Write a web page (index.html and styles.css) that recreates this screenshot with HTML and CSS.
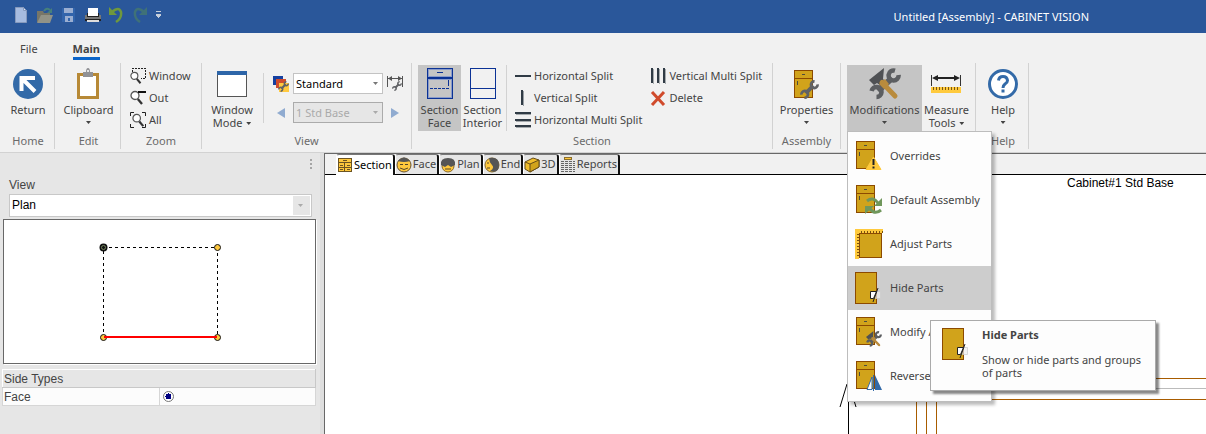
FILE: index.html
```html
<!DOCTYPE html>
<html lang="en">
<head>
<meta charset="utf-8">
<title>Untitled [Assembly] - CABINET VISION</title>
<link rel="stylesheet" href="styles.css">
</head>
<body>
<svg class="defs" aria-hidden="true">
  <symbol id="wrench" viewBox="0 0 20 20">
    <g fill="none" stroke="#606265"><path stroke-width="4" d="M6 14L14 6"/><path stroke-width="2.8" d="M15.3 1.5A3.5 3.5 0 1 0 18.5 4.7M4.7 18.5A3.5 3.5 0 1 0 1.5 15.3"/></g>
  </symbol>
  <symbol id="tools" viewBox="0 0 32 32">
    <g fill="none" stroke="#5c5e61"><path stroke-width="6" d="M9 23L23 10"/><path stroke-width="4.5" d="M26 2.6A5 5 0 1 0 29.6 7M7.5 29A5 5 0 1 0 2.6 23"/></g>
    <path fill="#4f5154" d="M15 0L14 11L17 14L12 18L8 15L5 17L0 12Z"/>
    <path fill="none" stroke="#b98b3d" stroke-width="5" stroke-linecap="round" d="M13 14.500L26 28"/>
    <path fill="#b98b3d" d="M10 16L16 11L20 16L15 21Z"/>
  </symbol>
  <symbol id="cabinet" viewBox="0 0 20 28">
    <g shape-rendering="crispEdges"><path fill="#d1a31b" stroke="#8c4a00" d="M.5.5h18v27H.5zM.5 8.500h18"/><path stroke="#4d4d40" d="M8 4.500h3M3.500 11v4"/></g>
  </symbol>
  <symbol id="hidden-part" viewBox="0 0 28 32">
    <path shape-rendering="crispEdges" fill="#d1a31b" stroke="#8c4a00" d="M.5.5h21v31H.5z"/>
    <path fill="#eee" fill-opacity=".7" stroke="#ccc" stroke-opacity=".7" d="M20.500 19.500h5v7h-5z"/>
    <path fill="#fff" stroke="#222" d="M15.500 19.500h6l-3 7h-3z"/>
    <path stroke="#222" d="M23 16L18 30"/>
  </symbol>
  <symbol id="lens" viewBox="0 0 16 16">
    <circle cx="5" cy="5.500" r="4" fill="#fff" stroke="#555" stroke-width="1.300"/><path stroke="#333" stroke-width="2.300" d="M7.800 9L12 14"/>
  </symbol>
</svg>

<header class="titlebar">
  <div class="quick">
    <button aria-label="New"><svg width="16" height="16"><path fill="#a7bce0" stroke="#879abd" d="M2.500.5h8l3 3v12h-11z"/><path fill="#dce5f5" stroke="#879abd" d="M10.500.5v3h3z"/></svg></button>
    <button aria-label="Open"><svg width="18" height="16"><path fill="#777668" d="M1 4h6l1 2h6v9H1z"/><path fill="#929387" d="M5 8h12l-3 8H1z"/><path fill="none" stroke="#47807b" stroke-width="2" d="M8 4q3-4 6-1"/><path fill="#47807b" d="M16 1v5h-5z"/></svg></button>
    <button aria-label="Save"><svg width="16" height="16"><path fill="#3264ab" d="M1 1h13v14H1z"/><path fill="#9aaed1" d="M3 1h9v5H3zM4 9h8v6H4z"/><path fill="#3264ab" d="M7 11h2v3H7z"/></svg></button>
    <button aria-label="Print"><svg width="18" height="16"><path fill="#777" d="M1 8h16v6H1z"/><path fill="#222" d="M3 6h12v4H3zM1 12h16v2H1z"/><path fill="#fff" d="M4 1h10v8H4z"/><path fill="#ddd" d="M3 13h12v2H3z"/></svg></button>
    <button aria-label="Undo"><svg width="16" height="16"><path fill="none" stroke="#6f983d" stroke-width="2.500" d="M3 5Q10 -1 12 5Q13 11 7 15"/><path fill="#6f983d" d="M0 0v8h8z"/></svg></button>
    <button aria-label="Redo"><svg width="16" height="16"><path fill="none" stroke="#3f7178" stroke-width="2.500" d="M12 5Q5 -1 3 5Q2 11 8 15"/><path fill="#3f7178" d="M15 0v8H7z"/></svg></button>
    <button aria-label="Customize"><svg class="crisp" width="8" height="8"><path stroke="#c5cedb" d="M1 .5h5M1 3.500h5"/><path fill="#c5cedb" d="M1 4h5L3.500 7z"/></svg></button>
  </div>
  <h1>Untitled [Assembly] - CABINET VISION</h1>
</header>

<nav class="tabs"><button>File</button><button class="current">Main</button></nav>

<div class="ribbon">
  <section class="group home">
    <div class="tools"><button class="big"><svg width="32" height="32"><circle cx="16" cy="16" r="15" fill="#336aa8"/><path fill="none" stroke="#fff" stroke-width="4" d="M9.500 23V10H23M10 10.500L23 23.500"/></svg><span>Return</span></button></div>
    <h2>Home</h2>
  </section>
  <section class="group edit">
    <div class="tools"><button class="big"><svg width="32" height="32"><path fill="#fff" stroke="#b78936" stroke-width="3" d="M6.500 6.500h19v23h-19z"/><path fill="#919296" d="M11 4h3q0-4 2-4t2 4h3v5H11z"/><circle cx="16" cy="3" r="1" fill="#fff"/></svg><span>Clipboard</span><i class="caret"></i></button></div>
    <h2>Edit</h2>
  </section>
  <section class="group zoom">
    <div class="tools stack">
      <button class="small"><svg width="16" height="16"><path class="crisp" fill="none" stroke="#222" stroke-dasharray="2 1" d="M2.500 4V.5h13v10H11"/><use href="#lens" y="3" width="14" height="14"/></svg><span>Window</span></button>
      <button class="small"><svg width="16" height="16"><use href="#lens" width="16" height="16"/><path stroke="#111" stroke-width="2" d="M8 2h8"/></svg><span>Out</span></button>
      <button class="small"><svg width="16" height="16"><use href="#lens" x="2" y="1" width="15" height="15"/><path fill="none" stroke="#222" d="M.5 4V.5H4M12 .5h3.500V4M.5 12v3.500H4M12 15.500h3.500V12"/></svg><span>All</span></button>
    </div>
    <h2>Zoom</h2>
  </section>
  <section class="group view">
    <div class="tools">
      <button class="big mode"><svg class="crisp" width="32" height="32"><path fill="#fff" stroke="#555" d="M1.500 3.500h29v25h-29z"/><path fill="#2d65a8" d="M1 3h30v4H1z"/></svg><span>Window<br>Mode <i class="caret"></i></span></button>
      <div class="pickers">
        <svg width="16" height="16"><path fill="#1540a0" d="M0 0h10v9H0z"/><path fill="#d04c2d" d="M3 3h10v9H3z"/><path fill="#ffc93f" d="M6 7h10v9H6z"/><use href="#wrench" x="5" y="5" width="11" height="11"/></svg>
        <label class="combo"><select aria-label="View style"><option>Standard</option></select><i class="caret"></i></label>
        <button aria-label="Dimension settings"><svg width="16" height="17"><path stroke="#555" d="M.5 1v11M15.500 1v11M1 3.500h14"/><path fill="#555" d="M1 3.500l4-2.500v5zM15 3.500l-4-2.500v5z"/><use href="#wrench" x="5" y="6" width="10" height="10"/></svg></button>
        <button aria-label="Previous" class="prev"><svg width="16" height="12"><path fill="#90abd0" d="M12 1v10L4 6z"/></svg></button>
        <label class="combo off"><select aria-label="Assembly" disabled><option>1 Std Base</option></select><i class="caret"></i></label>
        <button aria-label="Next"><svg width="16" height="12"><path fill="#90abd0" d="M4 1v10l8-5z"/></svg></button>
      </div>
    </div>
    <h2>View</h2>
  </section>
  <section class="group sect">
    <div class="tools">
      <button class="big pressed"><svg class="crisp" width="32" height="32"><path fill="none" stroke="#8a9bc9" d="M4.500 1.500h23v7h-23zM4.500 11.500h23v18h-23z"/><path fill="none" stroke="#0b3295" d="M3.500.5h25v30h-25zM3.500 9.500h25M3.500 10.500h25M13 4.500h6M24.500 12v6"/><path stroke="#0b3295" stroke-dasharray="3 1" d="M6 20.500h20"/></svg><span>Section<br>Face</span></button>
      <button class="big interior"><svg class="crisp" width="32" height="32"><path fill="none" stroke="#0b3295" d="M3.500.5h25v30h-25zM3.500 20.500h25"/></svg><span>Section<br>Interior</span></button>
      <div class="splits">
        <button class="small"><svg class="crisp" width="16" height="16"><path stroke="#303b45" stroke-width="2" d="M0 8h16"/></svg><span>Horizontal Split</span></button>
        <button class="small"><svg class="crisp" width="16" height="16"><path stroke="#303b45" stroke-width="2" d="M7 0v15"/><path stroke="#9aa0a5" d="M8.500 1v15"/></svg><span>Vertical Split</span></button>
        <button class="small"><svg class="crisp" width="16" height="16"><path stroke="#303b45" stroke-width="2" d="M0 1h16M0 8h16M0 14h16"/><path stroke="#a5aaad" d="M1 2.500h15M1 9.500h15M1 15.500h15"/></svg><span>Horizontal Multi Split</span></button>
        <button class="small"><svg class="crisp" width="16" height="16"><path stroke="#303b45" stroke-width="2" d="M2 0v15M8 0v15M14 0v15"/><path stroke="#a5aaad" d="M3.500 1v15M9.500 1v15M15.500 1v15"/></svg><span>Vertical Multi Split</span></button>
        <button class="small"><svg width="16" height="16"><path stroke="#d04b2c" stroke-width="3" d="M2 2L14 15M14 2L2 15"/></svg><span>Delete</span></button>
      </div>
    </div>
    <h2>Section</h2>
  </section>
  <section class="group assembly">
    <div class="tools"><button class="big"><svg width="32" height="32"><use href="#cabinet" x="3" y="2" width="20" height="28"/><use href="#wrench" x="9" y="12" width="19" height="19"/></svg><span>Properties</span><i class="caret"></i></button></div>
    <h2>Assembly</h2>
  </section>
  <section class="group modify">
    <div class="tools">
      <div class="dropdown">
        <button class="big pressed" aria-expanded="true"><svg width="32" height="32"><use href="#tools" width="32" height="32"/></svg><span>Modifications</span><i class="caret"></i></button>
        <ul class="menu">
          <li><button><svg width="28" height="32"><use href="#cabinet" x="1" y="1" width="20" height="28"/><path fill="#ffca3d" stroke="#ffca3d" stroke-linejoin="round" d="M18.500 17L26 29.500H11z"/><path stroke="#222" stroke-width="2" d="M18.500 19v6M18.500 26.500v2"/></svg><span>Overrides</span></button></li>
          <li><button><svg width="28" height="32"><use href="#cabinet" x="1" y="1" width="20" height="28"/><g fill="none" stroke="#70975c" stroke-width="3"><path d="M12 17q6-5 11 2M26 26q-6 5-11-1"/></g><path fill="#70975c" d="M27 14v8h-8zM10 22h9l-9 8z"/></svg><span>Default Assembly</span></button></li>
          <li><button><svg class="crisp" width="28" height="32"><path fill="#ffca3d" d="M0 1h28v4H4v26H0z"/><path stroke="#76510f" stroke-width="2" stroke-dasharray="1 2" d="M6 4h22M3 6v24"/><path fill="#d1a31b" stroke="#8c4a00" d="M4.500 5.500h22v24h-22z"/></svg><span>Adjust Parts</span></button></li>
          <li class="hot"><button aria-describedby="tip"><svg width="28" height="32"><use href="#hidden-part" width="28" height="32"/></svg><span>Hide Parts</span></button>
            <div class="tooltip" role="tooltip" id="tip"><svg width="28" height="32"><use href="#hidden-part" width="28" height="32"/></svg><div><b>Hide Parts</b><p>Show or hide parts and groups of parts</p></div></div>
          </li>
          <li><button><svg width="28" height="32"><use href="#cabinet" x="1" y="1" width="20" height="28"/><use href="#tools" x="11" y="15" width="16" height="16"/></svg><span>Modify Assembly</span></button></li>
          <li><button><svg width="28" height="32"><use href="#cabinet" x="1" y="1" width="20" height="28"/><path fill="#fff" stroke="#336aa8" d="M17 17v12.500h-5z"/><path fill="#336aa8" d="M20 15l7 15h-7z"/><path stroke="#336aa8" d="M18.500 15v16"/></svg><span>Reverse</span></button></li>
        </ul>
      </div>
      <button class="big"><svg width="32" height="32"><path class="crisp" stroke="#333" d="M1.500 7v11M30.500 7v11"/><path stroke="#222" stroke-width="2" d="M6 10h20"/><path fill="#222" d="M2 10l6-3v6zM30 10l-6-3v6z"/><path fill="#ffca3d" d="M1 19h30v6H1z"/><path class="crisp" stroke="#7a5712" stroke-width="3" stroke-dasharray="1 2" d="M3 20.500h27"/></svg><span>Measure<br>Tools <i class="caret"></i></span></button>
    </div>
    <h2></h2>
  </section>
  <section class="group help">
    <div class="tools"><button class="big"><svg width="32" height="32"><circle cx="16" cy="16" r="13.500" fill="#fff" stroke="#336aa8" stroke-width="3"/><path fill="none" stroke="#336aa8" stroke-width="3" d="M11.500 12.500Q12 8.500 16 8.500T20.500 12.500Q20.500 14.500 18 16Q16 17.500 16 20M16 21.500v3"/></svg><span>Help</span><i class="caret"></i></button></div>
    <h2>Help</h2>
  </section>
</div>

<div class="workspace">
  <aside class="panel">
    <div class="grip"><i></i><i></i><i></i></div>
    <label class="view-label" for="view-select">View</label>
    <div class="plan-select"><select id="view-select"><option>Plan</option></select><i class="caret"></i></div>
    <div class="plan">
      <svg width="126" height="102">
        <g class="crisp"><path fill="none" stroke="#000" stroke-dasharray="3 3" d="M6.500 97V6.500H120.500V97"/></g>
        <circle cx="6.500" cy="6.500" r="4" fill="#111"/><circle cx="6.500" cy="6.500" r="2" fill="none" stroke="#72845c"/>
        <g fill="#ffc83d" stroke="#111"><circle cx="120.500" cy="6.500" r="3"/><circle cx="6.500" cy="96.500" r="3"/><circle cx="120.500" cy="96.500" r="3"/></g>
        <path stroke="red" stroke-width="2" d="M7 96h113"/>
      </svg>
    </div>
    <table class="sides">
      <thead><tr><th colspan="2">Side Types</th></tr></thead>
      <tbody><tr><td><label for="face">Face</label></td><td><input type="radio" id="face" checked></td></tr></tbody>
    </table>
  </aside>
  <main class="document">
    <div class="pages">
      <button class="current"><svg class="crisp" width="16" height="16"><path fill="#ffc83d" stroke="#6c5423" d="M1.500 1.500h13v13h-13zM1 5.500h14M1 10.500h14M7.500 5v10"/><path stroke="#6c5423" d="M6 3.500h4M3 8.500h3M10 8.500h3M3 12.500h3M10 12.500h3"/></svg><span>Section</span></button>
      <button><svg width="16" height="16"><circle cx="8" cy="8" r="7" fill="#ffc83d" stroke="#665332"/><path fill="#555" d="M2 4q6-7 12 0-6 2-12 0"/><path fill="none" stroke="#554728" d="M4 7.500h3M9 7.500h3M4 11q4 3 8 0"/></svg><span>Face</span></button>
      <button><svg width="16" height="16"><circle cx="8" cy="9" r="6" fill="#ffc83d" stroke="#86692d"/><path fill="#555" d="M1 8Q0 1 8 1t7 7l-4 2-3-2-3 2z"/><path stroke="#554728" d="M5 12h6"/></svg><span>Plan</span></button>
      <button><svg width="16" height="16"><circle cx="8" cy="8" r="7" fill="#ffc83d" stroke="#86692d"/><path fill="#555" d="M5 1q10-2 10 7t-9 6q5-3 2-6t-3-7"/><path stroke="#554728" d="M3 6h2M3 11h3"/></svg><span>End</span></button>
      <button><svg width="16" height="16"><path fill="#efbd2c" stroke="#654c18" d="M1 5l8-4 6 2v7l-9 5-5-3z"/><path fill="#d1a31b" stroke="#654c18" d="M6 7l9-4v7l-9 5z"/><path fill="none" stroke="#654c18" d="M1 5l5 2"/></svg><span>3D</span></button>
      <button><svg class="crisp" width="16" height="16"><path fill="#ffc83d" stroke="#8b6e2b" d="M4.500.5h7v2h-7z"/><path fill="none" stroke="#666" stroke-dasharray="3 1" d="M1 4.500h14M1 6.500h14M1 8.500h14M1 10.500h14M1 12.500h14M1 14.500h14"/></svg><span>Reports</span></button>
    </div>
    <div class="canvas">
      <svg class="drawing">
        <text x="742" y="12">Cabinet#1 Std Base</text>
        <path stroke="#000" fill="none" d="M522 209L515 232M524 209L531 232"/>
        <g class="crisp" fill="none"><path stroke="#000" d="M523.500 209v400"/><path stroke="#a85c00" d="M591.500 203.500v400M601.500 203.500v400M611.500 203.500v400M591 203.500h3000M591 224.500h3000"/><path stroke="#bbb" d="M591 213.500h3000"/></g>
      </svg>
    </div>
  </main>
</div>
</body>
</html>
```
FILE: styles.css
```css
* { box-sizing: border-box; }
body {
  margin: 0; min-height: 100vh; overflow: hidden;
  display: flex; flex-direction: column;
  font: 11px/13px "Noto Sans", "Open Sans", sans-serif;
  color: #444; background: #e6e6e6;
}
button, select { font: inherit; color: inherit; border: 0; padding: 0; background: none; }
svg { display: block; flex: none; }
h1, h2, p, ul { margin: 0; padding: 0; font: inherit; }
.defs { position: absolute; width: 0; height: 0; }
.crisp { shape-rendering: crispEdges; }
.caret {
  display: inline-block; flex: none; width: 5px; height: 3px;
  background: #444; clip-path: polygon(0 0, 100% 0, 50% 100%);
}

.titlebar {
  flex: none; height: 33px; display: flex; align-items: center;
  justify-content: space-between; padding: 0 117px 4px 13px;
  color: #fff; background: #2a579a;
}
.titlebar h1 { padding-top: 4px; }
.quick { display: flex; align-items: center; gap: 7px; }

.tabs { flex: none; display: flex; gap: 34px; height: 29px; padding: 7px 19px 2px; background: #f1f1f1; }
.tabs button { height: 20px; padding: 0 1px; border-bottom: 3px solid transparent; }
.tabs .current { font-weight: bold; padding: 0; border-color: #0b64c8; }

.ribbon { flex: none; display: flex; height: 91px; padding: 1px 0 3px; background: #f1f1f1; border-bottom: 1px solid #d2d2d2; }
.group { flex: none; display: flex; flex-direction: column; border-right: 1px solid #d2d2d2; padding-top: 2px; }
.group h2 { padding-top: 3px; text-align: center; color: #6a6a6a; }
.tools { display: flex; justify-content: center; height: 66px; }
.home { width: 55px; padding-left: 2px; }
.edit { width: 66px; padding-left: 2px; }
.zoom { width: 81px; }
.view { width: 210px; }
.sect { width: 361px; }
.assembly { width: 68px; }
.modify { width: 135px; }
.help { width: 53px; padding-left: 2px; }
.big { display: flex; flex-direction: column; align-items: center; height: 66px; padding: 3px 2px 0; white-space: nowrap; }
.big > svg { margin-bottom: 3px; }
.big > .caret { margin-top: 5px; }
.big span .caret { vertical-align: 2px; margin-left: 1px; }
.pressed { background: #c5c5c5; }
.small { display: flex; align-items: center; gap: 3px; height: 22px; white-space: nowrap; }
.small span, .menu li span { padding-bottom: 2px; }
.stack { flex-direction: column; padding-left: 9px; }

.view .tools { justify-content: flex-start; padding-left: 6px; }
.mode { width: 48px; }
.pickers {
  display: grid; grid-template: 21px 21px / 16px 90px 16px; gap: 8px 4px;
  align-items: center; align-self: center; margin-left: 7px; padding-left: 9px;
  border-left: 1px solid #d2d2d2;
}
.pickers button svg { margin: auto; }
.combo { display: flex; align-items: center; height: 21px; padding-right: 4px; border: 1px solid #c3c3c3; background: #fff; color: #000; }
.combo select, .plan-select select { flex: 1; min-width: 0; appearance: none; outline: 0; opacity: 1; }
.combo select { padding-left: 2px; }
.combo .caret { background: #777; }
.combo.off { color: #aaa; background: #e6e6e6; border-color: #ababab; }
.combo.off .caret { background: #aaa; }

.sect .tools { justify-content: flex-start; padding-left: 6px; }
.sect .big { width: 43px; }
.interior { margin-right: 2px; }
.splits { display: grid; grid-template-rows: repeat(3, 22px); grid-auto-flow: column; column-gap: 8px; padding-left: 8px; border-left: 1px solid #d2d2d2; }

.modify .tools { justify-content: flex-start; padding-left: 6px; }
.dropdown { position: relative; }
.dropdown > .big { width: 75px; }
.menu {
  position: absolute; z-index: 2; left: 0; top: 66px; width: 145px; padding: 2px 0 3px;
  list-style: none; background: #fdfdfd; border: 1px solid #bdbdbd; box-shadow: 3px 3px 3px #0004;
}
.menu li { position: relative; height: 44px; }
.menu li > button { display: flex; align-items: center; gap: 7px; width: 100%; height: 44px; padding-left: 7px; white-space: nowrap; overflow: hidden; }
.menu .hot { z-index: 3; }
.menu .hot > button { background: #cdcdcd; }
.tooltip {
  position: absolute; left: 82px; top: 54px; width: 226px; padding: 7px 8px 11px 11px;
  display: flex; gap: 12px; background: #fdfdfd; border: 1px solid #aaa; box-shadow: 3px 3px 2px #0007;
}
.tooltip b { display: block; margin-bottom: 12px; }

.workspace { flex: 1; display: flex; min-height: 0; }
.panel { flex: none; width: 324px; padding: 6px 4px 0 2px; border-right: 4px solid #dedede; font: 12px/13px "Liberation Sans", sans-serif; }
.grip { display: flex; flex-direction: column; align-items: flex-end; gap: 2px; padding-right: 4px; }
.grip i { width: 2px; height: 2px; background: #a5a5a5; }
.view-label { display: block; margin: 10px 7px 2px; }
.plan-select { display: flex; align-items: center; height: 23px; margin: 0 4px 2px 7px; padding-right: 8px; border: 1px solid #c8c8c8; background: linear-gradient(#e6e6e6, #e6e6e6) right 1px center / 17px 19px no-repeat #fff; color: #000; }
.plan-select select { padding-left: 2px; }
.plan-select .caret { background: #aaa; }
.plan { display: flex; justify-content: center; align-items: center; height: 145px; margin-left: 1px; border: 1px solid #686868; background: #fff; box-shadow: 1px 1px #fff; }
.sides { width: 100%; margin-top: 5px; border-collapse: collapse; line-height: 12px; }
.sides th, .sides td { width: 50%; height: 18px; padding: 0 1px; border: 1px solid #d6d6d6; font-weight: normal; text-align: left; }
.sides th { border-color: #fff #c8c8c8 #c8c8c8 #fff; }
.sides td { background: #fcfcfc; }
.sides input { appearance: none; display: block; width: 11px; height: 11px; margin: 0 2px; border: 1px solid #777; border-radius: 50%; background: radial-gradient(#000080 0 3px, #fff 3px); }

.document { flex: 1; min-width: 0; display: flex; flex-direction: column; border: solid #686868; border-width: 1px 0 0 1px; background: #fff; }
.pages { flex: none; display: flex; height: 21px; padding-left: 11px; background: #f1f1f1; border-bottom: 1px solid #000; }
.pages button { display: flex; align-items: center; gap: 1px; height: 20px; padding: 0 1px 0 0; background: #e6e6e6; border-right: 2px solid #111; border-left: 1px solid #fff; border-top: 1px solid #777; border-radius: 3px 3px 0 0; }
.pages span { padding-bottom: 2px; }
.pages .current { height: 21px; color: #000; background: #fff; }
.canvas { flex: 1; min-height: 0; overflow: hidden; }
.drawing { width: 100%; height: 100%; font: 12px "Liberation Sans", sans-serif; fill: #000; }
```
